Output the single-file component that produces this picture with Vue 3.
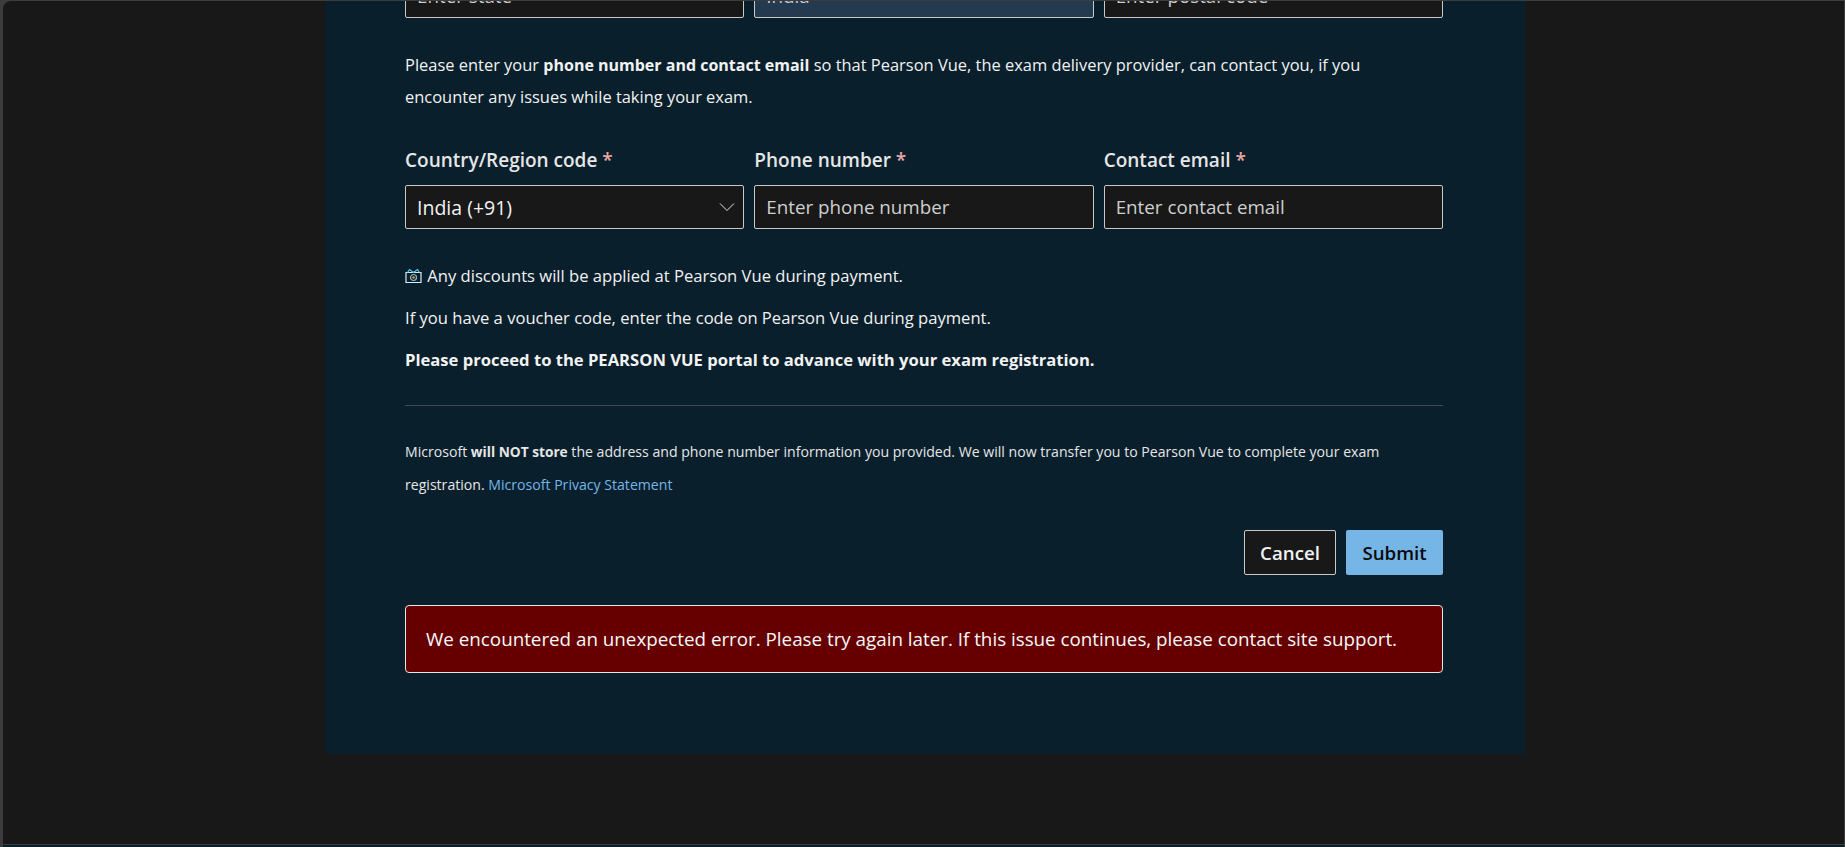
<script setup>
const fields = [
  { label: 'Country/Region code', type: 'select', value: 'India (+91)' },
  { label: 'Phone number', type: 'input', value: 'Enter phone number' },
  { label: 'Contact email', type: 'input', value: 'Enter contact email' }
]
</script>

<template>
  <div class="window">
    <div class="view">
      <main class="panel">
        <div class="cols">
          <div class="field"><span class="ph">Enter state</span></div>
          <div class="field filled"><span class="ph">India</span></div>
          <div class="field"><span class="ph">Enter postal code</span></div>
        </div>
        <p class="intro">
          Please enter your <b>phone number and contact email</b> so that Pearson Vue, the exam delivery provider, can contact you, if you<br />encounter any issues while taking your exam.
        </p>
        <div class="cols labelled">
          <div v-for="f in fields" :key="f.label" class="col">
            <div class="lab">{{ f.label }} <span class="req">*</span></div>
            <div class="field">
              <span :class="f.type === 'select' ? 'val' : 'ph'">{{ f.value }}</span>
              <svg v-if="f.type === 'select'" class="chev" width="16" height="16" viewBox="0 0 16 16" fill="none" stroke="#e6e6e6" stroke-width="1"><path d="M1 4.5 8 11.5 15 4.5" /></svg>
            </div>
          </div>
        </div>
        <p class="note first">
          <svg class="ico" width="17" height="16" viewBox="0 0 17 16" fill="none">
            <path d="M1 4.5h15v10H1z" stroke="#d8eef4" stroke-width="1.2" />
            <path d="M2.5 4.5 4.5 1.5 8.5 4.5 12.5 1.5 14.5 4.5" stroke="#5cc8e8" stroke-width="1.2" />
            <circle cx="8.5" cy="9.5" r="3" stroke="#8fb8c8" stroke-width="1.2" />
            <circle cx="8.5" cy="9.5" r="1.2" fill="#f0a040" />
          </svg>
          Any discounts will be applied at Pearson Vue during payment.
        </p>
        <p class="note">If you have a voucher code, enter the code on Pearson Vue during payment.</p>
        <p class="note"><b>Please proceed to the PEARSON VUE portal to advance with your exam registration.</b></p>
        <hr class="rule" />
        <p class="small">
          Microsoft <b>will NOT store</b> the address and phone number information you provided. We will now transfer you to Pearson Vue to complete your exam registration. <a class="link">Microsoft Privacy Statement</a>
        </p>
        <div class="actions">
          <button class="btn cancel">Cancel</button>
          <button class="btn submit">Submit</button>
        </div>
        <div class="error">We encountered an unexpected error. Please try again later. If this issue continues, please contact site support.</div>
      </main>
    </div>
    <div class="strip"></div>
  </div>
</template>

<style>
html, body { margin: 0; background: #3c3c3c; }
</style>

<style scoped>
.window {
  box-sizing: border-box;
  width: 1845px;
  height: 847px;
  overflow: hidden;
  display: flex;
  flex-direction: column;
  background: #3c3c3c;
  padding: 1px 1px 0 3px;
  font-family: "Open Sans", "Noto Sans", sans-serif;
  color: #f2f2f2;
}
.view {
  flex: 1;
  min-height: 0;
  overflow: hidden;
  background: #181818;
  border-top-left-radius: 8px;
}
.strip {
  flex: none;
  height: 2px;
  background: #0a1f2c;
  border-top: 1px solid #3c3c3c;
}
.panel {
  box-sizing: border-box;
  width: 1200px;
  height: 780px;
  margin: -27px 0 0 322px;
  padding: 0 82px 0 80px;
  background: #091f2c;
  font-size: 16.6px;
}
.cols { display: grid; grid-template-columns: repeat(3, 1fr); gap: 10px; }
.field {
  box-sizing: border-box;
  height: 44px;
  display: flex;
  align-items: center;
  justify-content: space-between;
  padding: 0 11px;
  background: #181818;
  border: 1px solid #c8c8c8;
  border-radius: 2px;
  font-size: 18.8px;
}
.filled { background: #243a4e; }
.ph { color: #cfcfcf; }
.val { color: #f2f2f2; font-size: 19.5px; }
.chev { margin-right: -3px; }
.intro { margin: 31px 0 0; line-height: 32px; font-size: 16.45px; }
.intro b { font-size: 16px; }
.labelled { margin-top: 34px; }
.lab { font-size: 19px; font-weight: 600; line-height: 26px; margin-bottom: 12px; color: #e6e6e6; }
.req { color: #e8a8a8; }
.note { margin: 15px 0 0; line-height: 27px; height: 27px; }
.first { margin-top: 33px; }
.ico { vertical-align: -2px; margin-right: 1px; }
.rule { margin: 32px 0 0; border: 0; border-top: 1px solid #3d474d; }
.small { margin: 29px 0 0; font-size: 14.1px; line-height: 33px; color: #e6e6e6; }
.small b { font-size: 13.7px; }
.link { color: #75b6e7; }
.actions { display: flex; justify-content: flex-end; gap: 10px; margin-top: 29px; }
.btn {
  box-sizing: border-box;
  height: 45px;
  padding: 0;
  border-radius: 2px;
  font: 600 18.7px "Open Sans", "Noto Sans", sans-serif;
}
.cancel { width: 92px; background: #181818; border: 1px solid #c8c8c8; color: #f2f2f2; }
.submit { width: 97px; background: #75b6e7; border: 0; color: #0a0a0a; }
.error {
  box-sizing: border-box;
  margin-top: 30px;
  height: 68px;
  padding: 0 20px;
  display: flex;
  align-items: center;
  background: #660000;
  border: 1px solid #e6e6e6;
  border-radius: 4px;
  font-size: 18.8px;
  color: #f8f8f8;
}
</style>
